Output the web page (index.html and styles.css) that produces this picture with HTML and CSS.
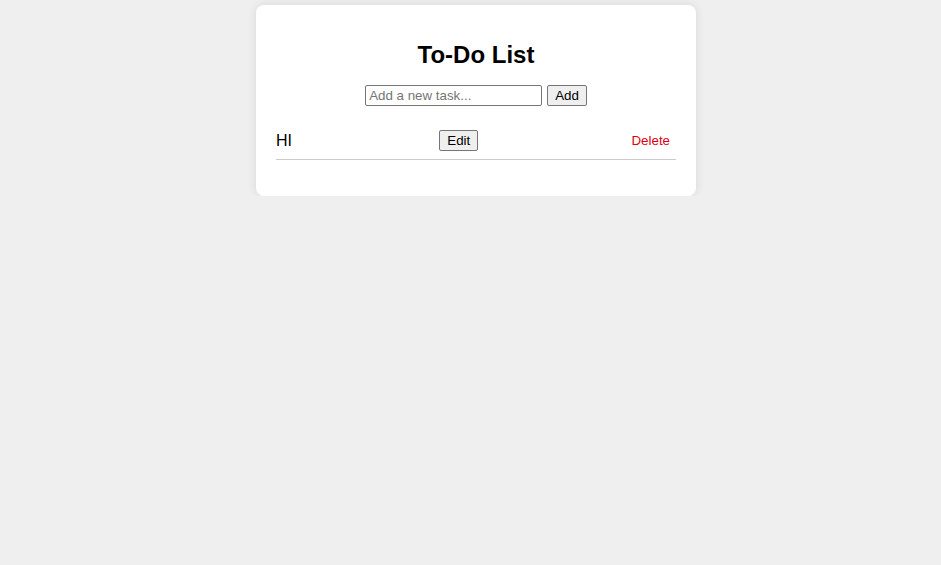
FILE: index.html
```html
<!DOCTYPE html>
<html>
<head>
<meta charset="utf-8">
<title>To-Do List</title>
<link rel="stylesheet" href="styles.css">
</head>
<body>
<div class="card">
  <h1 class="title">To-Do List</h1>
  <div class="add-row">
    <input class="task-input" type="text" placeholder="Add a new task...">
    <button class="btn">Add</button>
  </div>
  <ul class="list">
    <li class="item">
      <span class="item-text">HI</span>
      <button class="btn">Edit</button>
      <button class="delete">Delete</button>
    </li>
  </ul>
</div>
</body>
</html>
```
FILE: styles.css
```css
html, body {
  margin: 0;
  padding: 0;
}
body {
  background: #efefef;
  font-family: "Liberation Sans", Arial, sans-serif;
  padding: 5px 0 0 11px;
}
.card {
  width: 400px;
  margin: 0 auto;
  background: #fff;
  padding: 20px;
  border-radius: 8px;
  box-shadow: 0 0 10px rgba(0, 0, 0, 0.1);
}
.title {
  font-size: 24px;
  font-weight: bold;
  text-align: center;
  margin: 16px 0;
  line-height: 28px;
  color: #000;
}
.add-row {
  display: flex;
  justify-content: center;
  gap: 5px;
}
.task-input {
  box-sizing: border-box;
  width: 177px;
  height: 21px;
  margin: 0;
  padding: 1px 3px;
  font-family: "Liberation Sans", Arial, sans-serif;
  font-size: 13.333px;
  border: 1px solid #767676;
  border-radius: 2px;
}
.task-input::placeholder {
  color: #757575;
}
.btn {
  box-sizing: border-box;
  height: 21px;
  margin: 0;
  padding: 0 7px;
  font-family: "Liberation Sans", Arial, sans-serif;
  font-size: 13.333px;
  color: #000;
  background: #efefef;
  border: 1px solid #767676;
  border-radius: 2px;
}
.list {
  list-style: none;
  margin: 16px 0;
  padding: 0;
}
.item {
  display: flex;
  justify-content: space-between;
  align-items: center;
  padding: 8px 0;
  border-bottom: 1px solid #ccc;
}
.item-text {
  font-size: 16px;
  color: #000;
}
.delete {
  background: none;
  border: none;
  color: #e00010;
  font-family: "Liberation Sans", Arial, sans-serif;
  font-size: 13.333px;
  padding: 1px 6px;
  margin: 0;
}
```
